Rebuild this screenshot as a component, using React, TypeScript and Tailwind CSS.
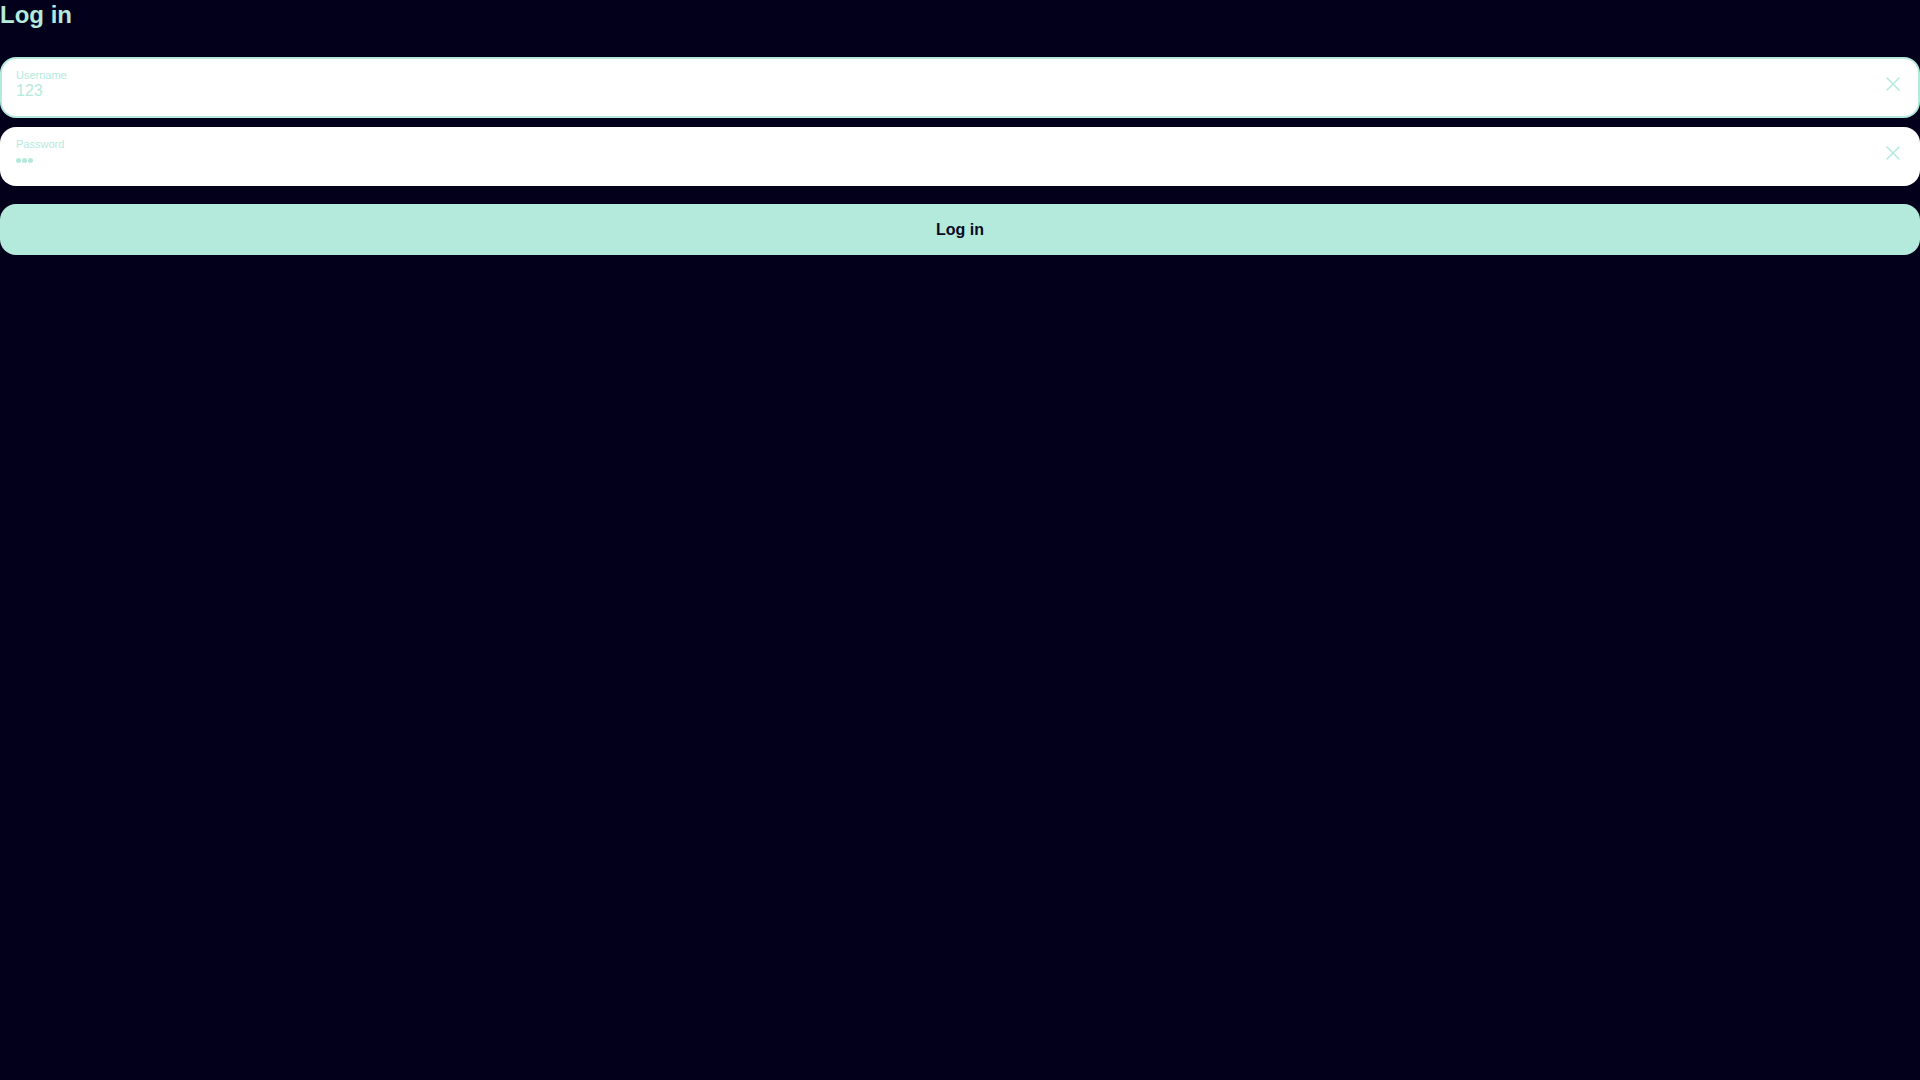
import { X } from "lucide-react";

// small clear button shown at the right end of each field
function ClearIcon({ top }: { top: string }) {
  return <X size={24} strokeWidth={1.5} className={`text-[#b4eadb] shrink-0 ${top}`} />;
}

export default function App() {
  return (
    <div className="min-h-screen w-full bg-[#03001c] font-['Liberation_Sans',Arial,sans-serif]">
      <h1 className="text-[24px] leading-[30px] font-bold text-[#b4eadb]">Log in</h1>

      {/* Username (focused) */}
      <div className="mt-[27px] h-[61px] rounded-[16px] border-2 border-[#b4eadb] bg-white pl-[14px] pr-[13px] flex items-start">
        <div className="flex-1 flex flex-col pt-[10px]">
          <span className="text-[11px] leading-[13px] text-[#b4eadb]">Username</span>
          <span className="text-[16px] leading-[18px] text-[#b4eadb]">123</span>
        </div>
        <ClearIcon top="mt-[13px]" />
      </div>

      {/* Password */}
      <div className="mt-[9px] h-[59px] rounded-[16px] bg-white pl-[16px] pr-[15px] flex items-start">
        <div className="flex-1 flex flex-col pt-[11px]">
          <span className="text-[11px] leading-[13px] text-[#b4eadb]">Password</span>
          <div className="mt-[7px] flex gap-[1px]">
            <span className="w-[5px] h-[5px] rounded-full bg-[#b4eadb]" />
            <span className="w-[5px] h-[5px] rounded-full bg-[#b4eadb]" />
            <span className="w-[5px] h-[5px] rounded-full bg-[#b4eadb]" />
          </div>
        </div>
        <ClearIcon top="mt-[14px]" />
      </div>

      <button className="mt-[18px] h-[51px] w-full rounded-[16px] bg-[#b4eadb] text-[16px] font-bold text-[#0a0a24]">
        Log in
      </button>
    </div>
  );
}
